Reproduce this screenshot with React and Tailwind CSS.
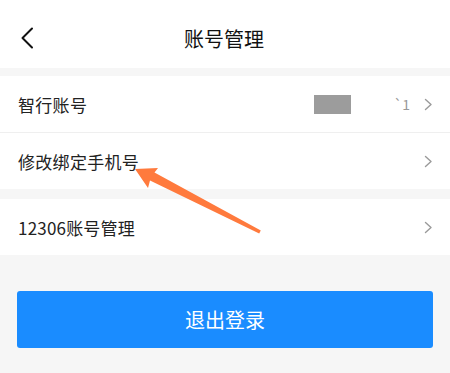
import React from "react";

const Chevron = () => (
  <svg width="9" height="13" viewBox="0 0 9 13" fill="none">
    <path d="M1.5 1.5 L7 6.5 L1.5 11.5" stroke="#9a9a9a" strokeWidth="1.4" strokeLinecap="round" strokeLinejoin="round" />
  </svg>
);

export default function App() {
  return (
    <div
      className="relative w-[450px] h-[373px] bg-[#f6f6f6] overflow-hidden text-[#222]"
      style={{ fontFamily: '"Noto Sans CJK SC", "Noto Sans", sans-serif' }}
    >
      <div className="h-[68px] bg-white flex items-center relative">
        <div className="pl-[20px] flex items-center mt-[8px]">
          <svg width="14" height="22" viewBox="0 0 14 22" fill="none">
            <path d="M12 1.5 L2.5 11 L12 20.5" stroke="#111" strokeWidth="2" strokeLinecap="round" strokeLinejoin="round" />
          </svg>
        </div>
        <div className="absolute left-0 right-0 top-0 h-[68px] flex items-center justify-center pointer-events-none">
          <span className="text-[20px] leading-none text-[#111] mr-[2px] mt-[10px]">账号管理</span>
        </div>
      </div>
      <div className="h-[8px]" />
      <div className="bg-white">
        <div className="h-[57px] flex items-center pl-[18px] pr-[17px] border-b border-[#efefef]">
          <span className="text-[17px] leading-none flex-1 tracking-[0.3px]">智行账号</span>
          <div className="w-[37px] h-[19px] bg-[#9c9c9c] mr-[43px]" />
          <span className="text-[14px] text-[#999] mr-[14px] leading-none">`1</span>
          <Chevron />
        </div>
        <div className="h-[56px] flex items-center pl-[18px] pr-[17px]">
          <span className="text-[17px] leading-none flex-1 tracking-[0.3px]">修改绑定手机号</span>
          <Chevron />
        </div>
      </div>
      <div className="h-[10px]" />
      <div className="bg-white h-[56px] flex items-center pl-[18px] pr-[17px]">
        <span className="text-[17px] leading-none flex-1 tracking-[0.2px]">12306账号管理</span>
        <Chevron />
      </div>
      <div className="px-[17px] pt-[36px]">
        <div className="h-[57px] rounded-[3px] bg-[#1a8cff] flex items-center justify-center">
          <span className="text-[20px] text-white leading-none">退出登录</span>
        </div>
      </div>
      <svg className="absolute left-0 top-0 pointer-events-none" width="450" height="373" viewBox="0 0 450 373">
        <path d="M260.8 230.6 L259.2 233.4 L150 180.5 L148 188 L135 169 L158 168 L154.5 172.5 Z" fill="#ff7a3d" />
      </svg>
    </div>
  );
}
